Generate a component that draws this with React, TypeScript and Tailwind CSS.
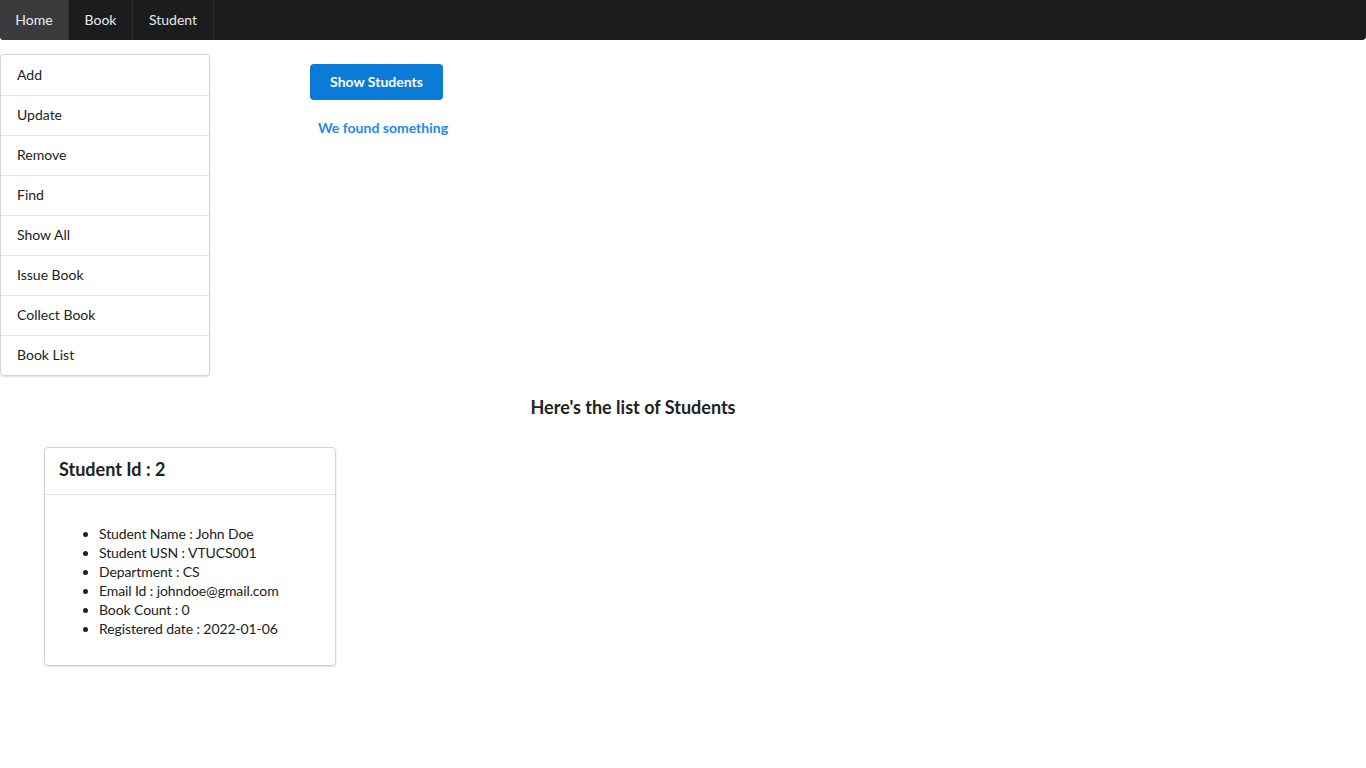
import React from 'react'

const menuItems = ['Add', 'Update', 'Remove', 'Find', 'Show All', 'Issue Book', 'Collect Book', 'Book List']

const student = [
  'Student Name : John Doe',
  'Student USN : VTUCS001',
  'Department : CS',
  'Email Id : johndoe@gmail.com',
  'Book Count : 0',
  'Registered date : 2022-01-06',
]

export default function App() {
  return (
    <div className="min-h-screen bg-white text-[14px] text-[#212121]" style={{ fontFamily: 'Lato, "Open Sans", sans-serif' }}>
      {/* Top nav */}
      <nav className="flex h-10 bg-[#1b1c1d] rounded-[4px] rounded-t-none">
        <a className="flex items-center pb-[2px] px-4 bg-[#3a3b3c] text-white/90 border-r border-[#2c2d2e] rounded-bl-[4px] w-[69px] justify-center">Home</a>
        <a className="flex items-center pb-[2px] px-4 text-white/90 border-r border-[#2c2d2e] w-[64px] justify-center">Book</a>
        <a className="flex items-center pb-[2px] px-4 text-white/90 border-r border-[#2c2d2e] w-[81px] justify-center">Student</a>
      </nav>

      <div className="flex">
        {/* Side menu */}
        <div className="mt-[14px] w-[210px] border border-[#d4d4d5] rounded-[4px] shadow-[0_1px_2px_0_rgba(34,36,38,0.15)]">
          {menuItems.map((item, i) => (
            <div key={item} className={'h-10 flex items-center pb-[2px] px-4 ' + (i > 0 ? 'border-t border-[#e6e6e6]' : '')}>
              {item}
            </div>
          ))}
        </div>

        {/* Main actions */}
        <div className="ml-[100px] mt-6 flex flex-col items-start">
          <button className="h-9 w-[133px] pb-[2px] rounded-[4px] bg-[#0a7bd6] text-white font-bold">Show Students</button>
          <p className="mt-[17px] ml-2 text-[#1e88f0] font-bold">We found something</p>
        </div>
      </div>

      <h2 className="mt-[19px] pr-[100px] text-center text-[18px] font-bold leading-6">Here's the list of Students</h2>

      <div className="mt-[28px] ml-[44px] w-[292px] border border-[#d4d4d5] rounded-[4px] shadow-[0_1px_2px_0_rgba(34,36,38,0.15)]">
        <div className="h-[47px] px-[14px] pb-[4px] flex items-center border-b border-[#e6e6e6]">
          <h3 className="text-[18px] font-bold">Student Id : 2</h3>
        </div>
        <div className="p-[14px]">
          <ul className="list-disc pl-10 mt-[15px] mb-[13px] leading-[19px] tracking-[-0.1px]">
            {student.map(s => (
              <li key={s}>{s}</li>
            ))}
          </ul>
        </div>
      </div>
    </div>
  )
}
